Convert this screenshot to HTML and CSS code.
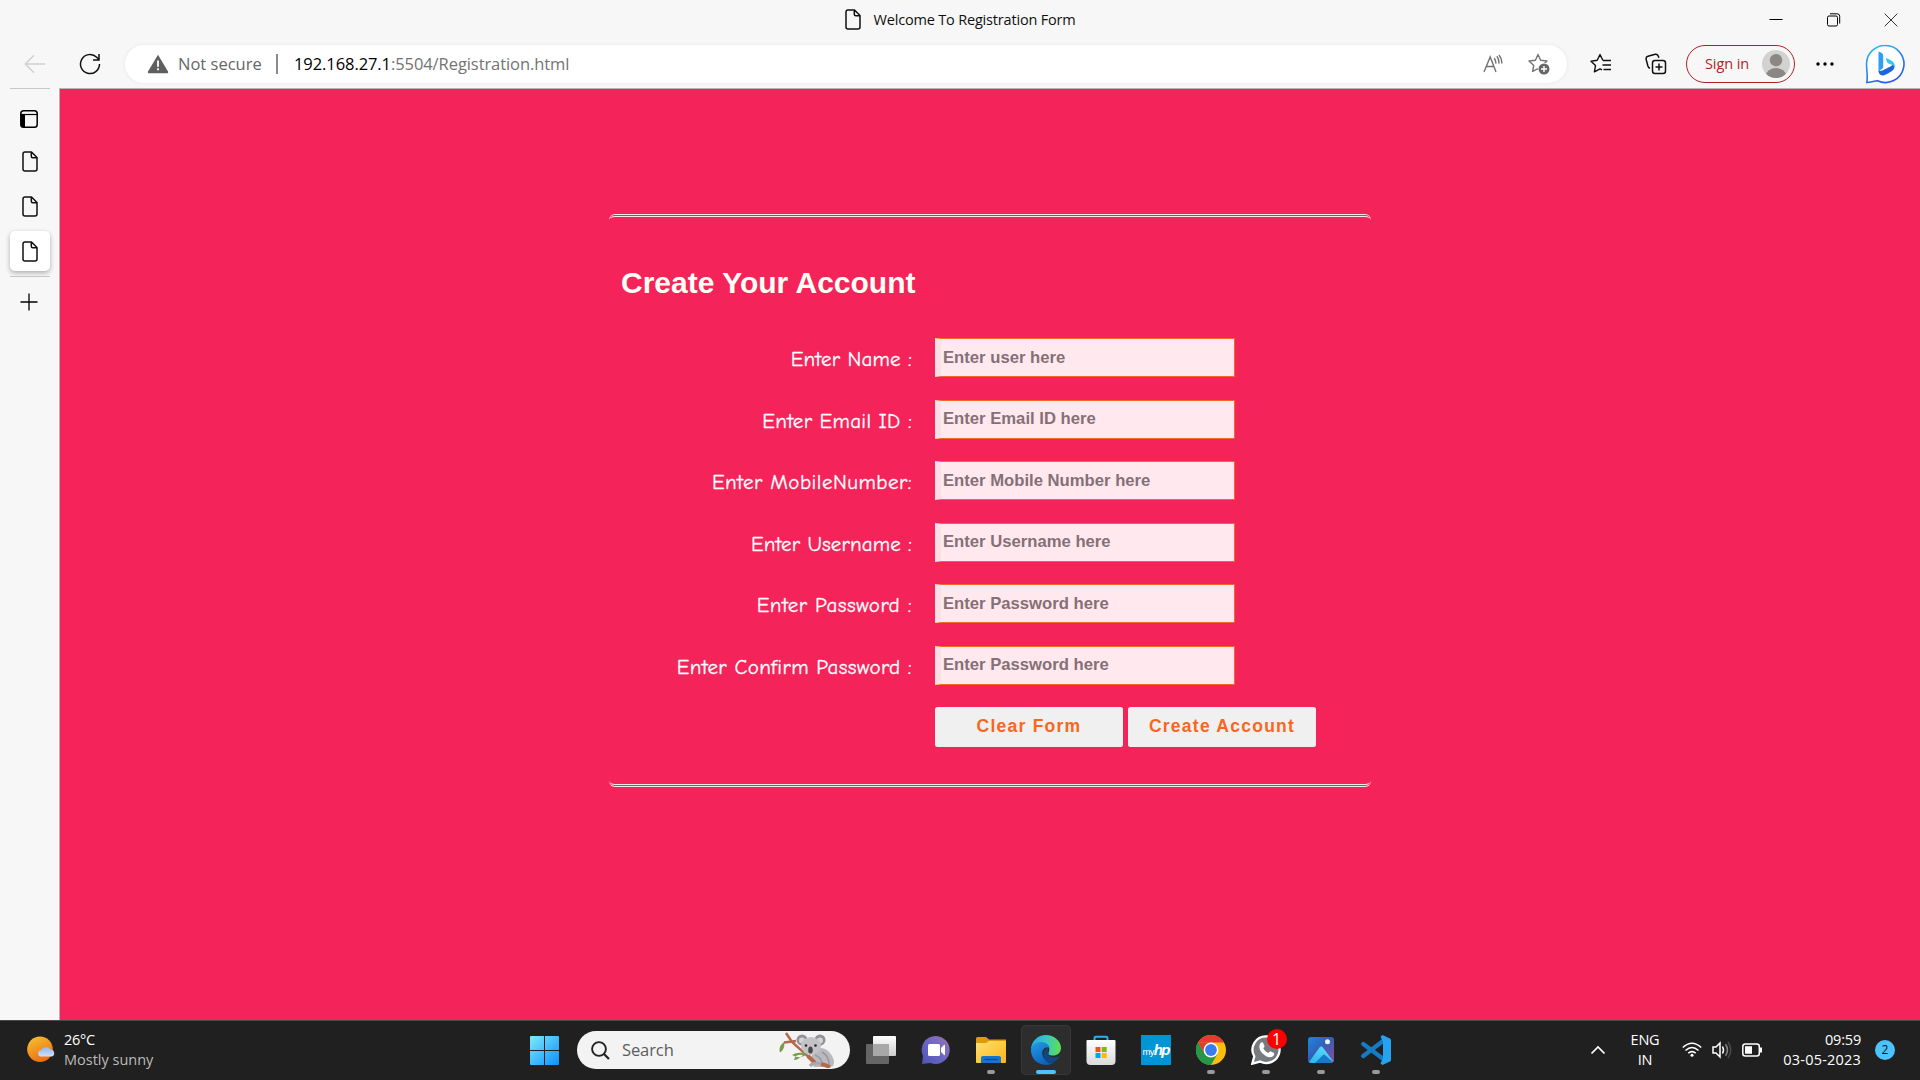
FILE: index.html
```html
<!DOCTYPE html>
<html lang="en">
<head>
<meta charset="utf-8">
<title>Welcome To Registration Form</title>
<link rel="stylesheet" href="styles.css">
</head>
<body>
<svg class="defs" width="0" height="0" aria-hidden="true">
  <defs>
    <symbol id="page" viewBox="0 0 16 21"><path d="M3 1h6.5L15 6.5V18a2 2 0 0 1-2 2H3a2 2 0 0 1-2-2V3a2 2 0 0 1 2-2zM9.300 1v4.200a1.500 1.500 0 0 0 1.500 1.500H15" fill="none" stroke="currentColor" stroke-width="1.500" stroke-linejoin="round"/></symbol>
  </defs>
</svg>
<header class="browser">
  <div class="titlebar">
    <div class="title"><svg class="page-icon" width="16" height="21"><use href="#page"/></svg><span>Welcome To Registration Form</span></div>
    <div class="window-controls">
      <svg width="14" height="14" viewBox="0 0 14 14"><path d="M0.500 6.500h13" stroke="#000"/></svg>
      <svg width="14" height="14" viewBox="0 0 14 14" fill="none" stroke="#000"><rect x=".5" y="3" width="10" height="10" rx="1.500"/><path d="M3 .8h7.200a2.500 2.500 0 0 1 2.500 2.500v7.200"/></svg>
      <svg width="14" height="14" viewBox="0 0 14 14"><path d="M.7.7l12.600 12.600M13.300.7.7 13.300" stroke="#333"/></svg>
    </div>
  </div>
  <div class="toolbar">
    <svg class="back" width="22" height="20" viewBox="0 0 22 20"><path d="M21 10H1.500M10 1.300 1.300 10l8.700 8.700" fill="none" stroke="#cfcfcf" stroke-width="1.400"/></svg>
    <svg class="reload" width="22" height="22" viewBox="0 0 22 22"><path d="M20.500 11a9.500 9.500 0 1 1-2.800-6.700L20 6.500M20 1v6h-6" fill="none" stroke="#111" stroke-width="1.500"/></svg>
    <div class="address">
      <svg width="22" height="20" viewBox="0 0 22 20"><path d="M11 .8 1 17.400c-.5 1 .1 1.800 1.100 1.800h17.800c1 0 1.600-.8 1.100-1.800z" fill="#5f5f5f"/><path d="M11 6.500v6.300M11 14.300v2" stroke="#fff" stroke-width="1.800"/></svg>
      <span class="security">Not secure</span>
      <span class="divider"></span>
      <span class="url"><b>192.168.27.1</b>:5504/Registration.html</span>
      <svg class="read" width="20" height="20" viewBox="0 0 20 20" fill="none" stroke="#737373" stroke-width="1.400"><path d="M1 18 7.200 3 13 18M3.300 12.500h7.700M11.200 4.200q2 2.500 1.500 5.500M13.800 2.200q2.700 3.500 2 7.500M16 1q3.300 4 2.700 8.500"/></svg>
      <svg class="star" width="22" height="22" viewBox="0 0 22 22"><path d="m10 1.500 2.600 5.700 6.400.8-4.800 4.400 1.200 6.100L10 15.600 4.600 18.500l1.200-6.100L1 8l6.400-.8z" fill="none" stroke="#737373" stroke-width="1.400" stroke-linejoin="round"/><circle cx="16" cy="16" r="6.200" fill="#fff"/><circle cx="16" cy="16" r="5.500" fill="#666"/><path d="M16 13v6M13 16h6" stroke="#fff" stroke-width="1.400"/></svg>
    </div>
    <div class="actions">
      <svg width="22" height="22" viewBox="0 0 22 22" fill="none" stroke="#111" stroke-width="1.400" stroke-linejoin="round"><path d="M13 7.500 10 1.600 7.200 7.300 1 8.200l4.500 4.400-1.100 6.200L10 15.900l2 1M13 7.500h8M12.500 12H21M13.500 16.500H21"/></svg>
      <svg width="22" height="22" viewBox="0 0 22 22" fill="none" stroke="#111" stroke-width="1.500"><rect x="7.500" y="7.500" width="13" height="13" rx="2.500"/><path d="M14 10.500v7M10.500 14h7M5 15.300C3.500 15 3.200 14 2.900 13L1.200 6.600C.8 5 1.600 3.700 3 3.300L10.200 1.300c1.600-.4 2.600.3 3.200 1.900l.4 1.500"/></svg>
    </div>
    <div class="signin"><span>Sign in</span>
      <svg width="28" height="28" viewBox="0 0 28 28"><defs><clipPath id="face"><circle cx="14" cy="14" r="14"/></clipPath></defs><circle cx="14" cy="14" r="14" fill="#d4d2d0"/><g fill="#8b8785" clip-path="url(#face)"><circle cx="14" cy="10.200" r="6.200"/><ellipse cx="14" cy="25.500" rx="10" ry="7.500"/></g></svg>
    </div>
    <svg class="more" width="18" height="4" viewBox="0 0 18 4"><circle cx="2" cy="2" r="1.700"/><circle cx="9" cy="2" r="1.700"/><circle cx="16" cy="2" r="1.700"/></svg>
    <svg class="bing" width="40" height="40" viewBox="0 0 40 40"><defs><linearGradient id="bg1" x2=".6" y2="1"><stop stop-color="#27c4f5"/><stop offset="1" stop-color="#2456e6"/></linearGradient></defs><path d="M20 1.500a18.500 18.500 0 1 1-7.500 35.200C8.500 37.300 5 38.500 1.800 38.500 3 34 1.500 25 1.500 20A18.500 18.500 0 0 1 20 1.500z" fill="#fff" stroke="url(#bg1)" stroke-width="1.600"/><path d="m13.500 7.500 3 1.300q1.700.9 1.700 2.700v12.200l-4.700 4z" fill="#2f9df5"/><path d="M13.500 26.500q.3 5.300 4.700 4.900 2-.2 4.300-1.600l4.500-2.800q3.200-2.600 2.300-6.600-.5-1.700-2-2.400 1 3-2 4.600l-7.300 3.700q-3 1.300-4.500.2z" fill="#1d64df"/><path d="M20.800 14.800q.2-.8 1-.5l4 2q4.300 2.200 3.500 7-.8-2.200-3-2.800l-2.800-1q-1-.4-1.400-1.500z" fill="#31c8ef"/></svg>
  </div>
</header>
<div class="workspace">
  <nav class="tabs">
    <span class="rule"></span>
    <svg class="tab-menu" width="18" height="18" viewBox="0 0 18 18"><rect x=".8" y=".8" width="16.400" height="16.400" rx="2.800" fill="none" stroke="#000" stroke-width="1.500"/><path d="M1 4.500h16" stroke="#000" stroke-width="1.200"/><path d="M1 4.500h4V17H3q-2 0-2-2z"/></svg>
    <div class="tab"><svg class="page-icon" width="16" height="21"><use href="#page"/></svg></div>
    <div class="tab"><svg class="page-icon" width="16" height="21"><use href="#page"/></svg></div>
    <div class="tab active"><svg class="page-icon" width="16" height="21"><use href="#page"/></svg></div>
    <span class="rule after"></span>
    <svg class="new-tab" width="18" height="18" viewBox="0 0 18 18"><path d="M9 .5v17M.5 9h17" stroke="#000" stroke-width="1.300"/></svg>
  </nav>
  <main>
    <form class="register">
      <h1>Create Your Account</h1>
      <label class="l-name" for="n">Enter Name :</label><input id="n" placeholder="Enter user here">
      <label class="l-mail" for="e">Enter Email ID :</label><input id="e" placeholder="Enter Email ID here">
      <label class="l-mobile" for="m">Enter MobileNumber:</label><input id="m" placeholder="Enter Mobile Number here">
      <label class="l-user" for="u">Enter Username :</label><input id="u" placeholder="Enter Username here">
      <label class="l-pass" for="p">Enter Password :</label><input id="p" type="password" placeholder="Enter Password here">
      <label class="l-confirm" for="c">Enter Confirm Password :</label><input id="c" type="password" placeholder="Enter Password here">
      <div class="buttons"><button type="reset">Clear Form</button><button type="button">Create Account</button></div>
    </form>
  </main>
</div>
<footer class="taskbar">
  <div class="weather">
    <svg width="30" height="28" viewBox="0 0 30 28"><defs><linearGradient id="sun" x1=".2" x2=".7" y2="1"><stop stop-color="#f3c02f"/><stop offset="1" stop-color="#f0660f"/></linearGradient><linearGradient id="cloud" x2="0" y2="1"><stop stop-color="#8fb5ef"/><stop offset="1" stop-color="#cfe0fa"/></linearGradient></defs><circle cx="13" cy="13.200" r="12.800" fill="url(#sun)"/><path d="M13.500 20.500a3.200 3.200 0 0 1 .6-6.300 5.300 5.300 0 0 1 9.300-.7 3.600 3.600 0 0 1 1.400 7z" fill="url(#cloud)"/></svg>
    <div><p class="temp">26°C</p><p class="sky">Mostly sunny</p></div>
  </div>
  <div class="apps">
    <svg class="start" width="29" height="29" viewBox="0 0 29 29"><defs><linearGradient id="win" x2="1" y2="1"><stop stop-color="#7deafd"/><stop offset="1" stop-color="#0b90fb"/></linearGradient></defs><path d="M1 0h13v14H0V1q0-1 1-1zM15 0h13q1 0 1 1v13H15zM0 15h14v14H1q-1 0-1-1zM15 15h14v13q0 1-1 1H15z" fill="url(#win)"/></svg>
    <div class="search">
      <svg width="19" height="19" viewBox="0 0 19 19"><circle cx="8" cy="8" r="6.900" fill="none" stroke="#222" stroke-width="1.900"/><path d="m13 13 5 5" stroke="#222" stroke-width="2.200"/></svg>
      <span>Search</span>
      <svg class="koala" width="58" height="36" viewBox="0 0 58 36">
        <path d="M5 10.500 17 9M7 1l6 9 19 17" fill="none" stroke="#b4694c" stroke-width="2.500"/><path d="M5 10q-6 4.500-4 10.500 5.500-3.500 4-10.500zM13 23q6-4 15-1-6 6-15 1zM15 28q4 0 9-5-8-1-9 5z" fill="#779c4c"/>
        <path d="M36 17q9-3 15 4 6 7 3 13l-3 1H35q-5-7-1-14z" fill="#b9b9be"/><circle cx="23" cy="8" r="5.500" fill="#919197"/><circle cx="41" cy="8" r="5.500" fill="#919197"/><circle cx="23" cy="8.500" r="3" fill="#d9d3d7"/><circle cx="41" cy="8.500" r="3" fill="#d9d3d7"/><ellipse cx="32" cy="14" rx="10" ry="9" fill="#c2c2c7"/><ellipse cx="31.500" cy="18" rx="2.300" ry="3.500" fill="#4a484b"/><circle cx="27" cy="13.500" r="1.300" fill="#3d1f22"/><circle cx="36.500" cy="13.500" r="1.300" fill="#3d1f22"/><path d="M36 23q5 2 7 7M43 20q7 4 7 13" fill="none" stroke="#98989f" stroke-width="1.500"/><path d="m29 24 7 7M42 32q5 1 9 3.500" fill="none" stroke="#b4694c" stroke-width="4"/><path d="M31 34q3-4 11-2" fill="none" stroke="#a6a6ac" stroke-width="3"/>
      </svg>
    </div>
    <div class="app"><svg width="30" height="30" viewBox="0 0 30 30"><defs><linearGradient id="tv" x2="0" y2="1"><stop stop-color="#fff"/><stop offset="1" stop-color="#ccc"/></linearGradient></defs><rect x="7" y="1" width="23" height="20" rx="1" fill="url(#tv)"/><rect y="9" width="23" height="20" rx="1" fill="#777" opacity=".8"/><path d="M7 9h16v12H7z" fill="#a8a8a8"/></svg></div>
    <div class="app"><svg width="30" height="30" viewBox="0 0 30 30"><defs><linearGradient id="chat" x1="1" x2="0" y2="1"><stop stop-color="#9d72ad"/><stop offset=".5" stop-color="#6b67c3"/><stop offset="1" stop-color="#4c53b8"/></linearGradient></defs><path d="M15 1a14 14 0 1 1-5.500 27L1 29l1-8A14 14 0 0 1 15 1z" fill="url(#chat)"/><rect x="7" y="9" width="12" height="12" rx="1.500" fill="#fff"/><path d="m20 13 3-3q1-.5 1 .5v9q0 1-1 .5l-3-3z" fill="#fff"/></svg></div>
    <div class="app running"><svg width="30" height="30" viewBox="0 0 30 30"><defs><linearGradient id="fold" x2="1" y2="1"><stop stop-color="#ffdf73"/><stop offset="1" stop-color="#fbb616"/></linearGradient></defs><path d="M1.500 2H10l3 2.500h17V10H0V3.500Q0 2 1.500 2z" fill="#dc9b09"/><path d="M0 8h10l3-2h17v21q0 1-1 1H1q-1 0-1-1z" fill="url(#fold)"/><path d="M5 28v-5q0-2 2-2h16q2 0 2 2v5z" fill="#1474cf"/><path d="M8.500 24.500h13" stroke="#084d94" stroke-width="1.200"/></svg></div>
    <div class="app running current"><svg width="30" height="30" viewBox="0 0 30 30"><defs><linearGradient id="e1" x2="1"><stop stop-color="#27a9e5"/><stop offset=".5" stop-color="#37c6c7"/><stop offset="1" stop-color="#62df4b"/></linearGradient><linearGradient id="e2" x2=".6" y2="1"><stop stop-color="#229fe3"/><stop offset="1" stop-color="#0b5ec2"/></linearGradient></defs><path d="M0 15C0 6 7 0 15 0c8 0 15 6 15 13 0 5-4 7.500-8 7.500-3.500 0-5.500-1.300-4.500-2.800C20 13 17 8 11 8 5 8 2 10 0 15z" fill="url(#e1)"/><path d="M0 15C1 9 5 7 10 7c4 0 8 2.500 8.500 6-8-3-10 8-3 13 2 1.500 5 2 7 1.500C20 29.300 17.500 30 15 30 6 30-.3 23 0 15z" fill="url(#e2)"/><path d="M17.500 17.700q-1.500-1.500-.5-5-4.500 1.500-4.500 6.300 0 7 6 9.500 2 .5 4-1 3.500-2 5.500-5 .3-1.300-1-.8-3.500 1.500-7 .3-3-1.500-2.500-4.300z" fill="#114783"/></svg></div>
    <div class="app"><svg width="30" height="30" viewBox="0 0 30 30"><defs><linearGradient id="st" x2="0" y2="1"><stop stop-color="#fff"/><stop offset="1" stop-color="#dadada"/></linearGradient></defs><path d="M8.500 7V3q0-1.300 1.300-1.300h10.400q1.300 0 1.300 1.300v4" fill="none" stroke="#29b2ea" stroke-width="2"/><path d="M1.500 5h27q1 0 1 1v20q0 4-4 4h-21q-4 0-4-4V6q0-1 1-1z" fill="url(#st)"/><path d="M9.500 12h5v5h-5z" fill="#f25022"/><path d="M15.700 12h5v5h-5z" fill="#7fba00"/><path d="M9.500 18h5v5h-5z" fill="#00a4ef"/><path d="M15.700 18h5v5h-5z" fill="#ffb900"/></svg></div>
    <div class="app"><span class="hp"><small>my</small>hp</span></div>
    <div class="app running"><svg width="30" height="30" viewBox="0 0 30 30"><circle cx="15" cy="15" r="15" fill="#fbbe0c"/><path d="M2 7.500A15 15 0 0 1 28 7.500H15z" fill="#e33b2e"/><path d="M2 7.500A15 15 0 0 0 15 30l6.500-11.200-13-.1z" fill="#269748"/><path d="M2 7.500 8.500 18.700 15 7.500z" fill="#e33b2e"/><path d="M2 7.500 8.500 18.700l6.500 3.500V30A15 15 0 0 1 2 7.500z" fill="#269748"/><circle cx="15" cy="15" r="7.400" fill="#fff"/><circle cx="15" cy="15" r="5.900" fill="#3a7df0"/></svg></div>
    <div class="app running"><svg width="30" height="30" viewBox="0 0 30 30"><path d="M15.300 1.300a13.400 13.400 0 1 1-6.300 25.300L1.300 28.700l2-7.300A13.400 13.400 0 0 1 15.300 1.300z" fill="#777b7d" stroke="#fff" stroke-width="2.300"/><path d="M9.500 8q1-1.200 2.200-.7l1.800 3.700q.2.900-1.300 2.300 1.700 3.500 5 4.700 1.700-2 2.300-1.800l3.500 1.800q.7 3.300-3.500 4.200-4 .3-8.500-4.200-4.500-5-1.500-10z" fill="#fff"/></svg><span class="badge">1</span></div>
    <div class="app running"><svg width="26" height="26" viewBox="0 0 26 26"><defs><linearGradient id="ph" x2="1" y2="1"><stop stop-color="#168ae0"/><stop offset=".45" stop-color="#355eb7"/><stop offset="1" stop-color="#8a4d9b"/></linearGradient><linearGradient id="mt" x1="0" y1="1" x2=".8"><stop stop-color="#20b7ed"/><stop offset="1" stop-color="#67dafa"/></linearGradient></defs><rect width="26" height="26" rx="3" fill="url(#ph)"/><path d="m1 25 10.500-14.500q1.700-2 3.400 0L25 24q-1 2-3 2H3q-1 0-2-1z" fill="url(#mt)"/><path d="m7 26 8-8q1-1 2 0l8 7-2 1z" fill="#1679cd"/><circle cx="19.500" cy="4.800" r="2.500" fill="#e9f5ff"/></svg></div>
    <div class="app running"><svg width="30" height="30" viewBox="0 0 30 30"><path d="m2.300 9 20 15M2.300 21 22 6" stroke="#147bc4" stroke-width="4.300" stroke-linecap="round"/><path d="m21.500 0 7.500 3.500q1 .5 1 1.500v20q0 1-1 1.500L21.500 30l-2-1.500L22 23V7l-2.500-5.500z" fill="#25a3ef"/></svg></div>
  </div>
  <div class="tray">
    <svg class="chevron" width="16" height="10" viewBox="0 0 16 10"><path d="m1.500 8.500 6.500-6.500 6.500 6.500" fill="none" stroke="#fff" stroke-width="1.700"/></svg>
    <div class="lang">ENG<br>IN</div>
    <svg class="wifi" width="20" height="16" viewBox="0 0 20 16" fill="none" stroke="#fff" stroke-width="1.600"><path d="M.8 5.500q9.200-8.500 18.400 0M3.500 8.500q6.500-6 13 0M6.300 11.200q3.700-3.300 7.400 0"/><circle cx="10" cy="13.300" r="1.500" fill="#fff" stroke="none"/></svg>
    <svg class="volume" width="21" height="18" viewBox="0 0 21 18" fill="none" stroke="#fff" stroke-width="1.500"><path d="M1 6v6h3l4 4V2L4 6zM10.500 5.500q2 3.500 0 7"/><path d="M13.500 3.300q4 5.700 0 11.400" stroke="#888"/><path d="M16 1q5.500 8 0 16" stroke="#4a4a4a"/></svg>
    <svg class="battery" width="21" height="14" viewBox="0 0 21 14"><rect x=".8" y="1" width="16.500" height="12" rx="2.500" fill="none" stroke="#fff" stroke-width="1.500"/><path d="M3 3.300h7v7.400H3zM18 4.500h2v5h-2z" fill="#fff"/></svg>
    <div class="clock"><span class="time">09:59</span><br><span class="date">03-05-2023</span></div>
    <span class="count">2</span>
  </div>
</footer>
</body>
</html>
```
FILE: styles.css
```css
* { box-sizing: border-box; }
body {
  margin: 0;
  width: 1920px;
  height: 1080px;
  overflow: hidden;
  display: flex;
  flex-direction: column;
  font-family: "Open Sans", "Noto Sans", sans-serif;
  background: #f7f7f7;
  color: #111;
}
svg { display: block; flex: none; }
.defs { position: absolute; }
p { margin: 0; }

/* Browser chrome */
.browser { height: 88px; flex: none; white-space: nowrap; }
.titlebar {
  height: 39px;
  display: grid;
  grid-template-columns: 845px 1fr auto;
  align-items: center;
}
.title {
  grid-column: 2;
  display: flex;
  align-items: center;
  gap: 12.500px;
  font-size: 14.500px;
  letter-spacing: -.18px;
}
.window-controls { display: flex; gap: 43.500px; padding-right: 22px; }
.toolbar { height: 49px; display: flex; align-items: center; }
.back { margin-left: 24px; }
.reload { margin-left: 33px; }
.address {
  width: 1442px;
  height: 38px;
  margin-left: 24px;
  padding: 0 17px 0 22px;
  border-radius: 19px;
  background: #fff;
  box-shadow: 0 0 4px rgba(0, 0, 0, .07);
  display: flex;
  align-items: center;
  font-size: 16.500px;
}
.security, .url { padding-bottom: 1px; }
.security { margin-left: 9px; width: 84px; color: #666; }
.divider { width: 2px; height: 20px; margin: 0 16px 0 14px; background: #8a8a8a; }
.url { color: #737373; letter-spacing: -.08px; }
.url b { color: #000; font-weight: 400; }
.read { margin-left: auto; }
.star { margin-left: 25px; }
.actions { display: flex; gap: 33px; margin-left: 23px; }
.signin {
  width: 109px;
  height: 38px;
  margin-left: 19px;
  padding: 0 4px 0 18px;
  border: 1.500px solid #b01f24;
  border-radius: 19px;
  display: flex;
  align-items: center;
  justify-content: space-between;
  color: #b01f24;
  font-size: 14.500px;
  letter-spacing: -.1px;
}
.signin span { padding-bottom: 1px; }
.more { margin-left: 21px; }
.bing { margin-left: 31px; }

.workspace { height: 932px; flex: none; display: flex; }
.tabs { width: 59px; display: flex; flex-direction: column; align-items: center; }
.rule { width: 40px; height: 1px; background: #c8c8c8; flex: none; }
.tab-menu { margin: 21px 2px 13px 0; }
.tab {
  width: 40px;
  height: 40px;
  margin-bottom: 5px;
  flex: none;
  border-radius: 5px;
  display: flex;
  align-items: center;
  justify-content: center;
}
.tab.active { background: #fff; box-shadow: 0 2px 5px rgba(0, 0, 0, .3); }
.new-tab { margin: 16px 1px 0 0; }

/* Registration page */
main {
  flex: 1;
  border-top: 1px solid #b5b5b5;
  border-left: 1px solid #b5b5b5;
  background: #f4245b;
  padding: 125px 0 0 549px;
}
.register {
  width: 762px;
  height: 573px;
  padding-left: 12px;
  border: 3px double #eee;
  border-width: 3px 0;
  border-radius: 6px;
  display: grid;
  grid-template-columns: 291px 1fr;
  grid-template-rows: 121px repeat(7, 61.500px);
  column-gap: 23px;
}
.register h1 {
  grid-column: 1 / -1;
  margin: 48px 0 0;
  font: bold 30px/35px "Liberation Sans", Arial, sans-serif;
  color: #fffff4;
}
.register label {
  justify-self: end;
  font: 21px/30px "Comic Sans MS", "Comic Neue", Lato, sans-serif;
  -webkit-text-stroke: .3px #fff;
  padding-top: 6px;
  color: #fff;
  white-space: nowrap;
}
.l-name { letter-spacing: .2px; }
.l-mail { letter-spacing: .29px; }
.l-mobile { letter-spacing: .47px; }
.l-user { letter-spacing: .14px; }
.l-pass { letter-spacing: .48px; }
.l-confirm { letter-spacing: .36px; }
.register input {
  width: 300px;
  height: 39.200px;
  padding: 0 2px;
  border: 1px solid #f3672a;
  border-left: 6px solid #f6e2e6;
  border-radius: 0;
  background: #ffe9ee;
  font: bold 16.670px "Liberation Sans", Arial, sans-serif;
}
.register input::placeholder { color: #857077; }
.buttons { grid-column: 2; display: flex; gap: 5px; }
.buttons button {
  width: 188px;
  height: 40px;
  padding: 0 0 2px;
  border: 0;
  border-radius: 2.500px;
  background: #f0f0f0;
  color: #f96621;
  font: bold 17.500px "Liberation Sans", Arial, sans-serif;
  letter-spacing: 1.250px;
}

/* Taskbar */
.taskbar {
  height: 60px;
  flex: none;
  display: grid;
  grid-template-columns: 530px 1fr auto;
  align-items: center;
  border-top: 1px solid #484848;
  padding-bottom: 1px;
  background: #202020;
  color: #fff;
  font-size: 14.500px;
  line-height: 20px;
}
.weather { display: flex; align-items: center; gap: 7px; padding: 0 0 1px 27px; }
.weather .temp { letter-spacing: -.3px; }
.weather .sky { color: #bbb; }
.apps { display: flex; align-items: center; }
.search {
  width: 273px;
  height: 38px;
  margin: 0 3.500px 0 18px;
  padding: 0 13px 0 14px;
  border-radius: 19px;
  background: #f3f3f3;
  color: #5d5d5d;
  font-size: 16.500px;
  letter-spacing: -.1px;
  display: flex;
  align-items: center;
}
.search span { margin-left: 12px; }
.koala { margin-left: auto; }
.app {
  position: relative;
  width: 50px;
  height: 50px;
  margin-left: 5px;
  flex: none;
  display: flex;
  align-items: center;
  justify-content: center;
}
.search + .app { margin-left: 2px; }
.app.running::after {
  content: "";
  position: absolute;
  bottom: 1px;
  left: 21px;
  width: 8px;
  height: 4px;
  border-radius: 2px;
  background: #999;
}
.app.current { background: #2d2d2d; border-radius: 5px; box-shadow: inset 0 0 0 1px #383838; }
.app.current::after { left: 15px; width: 20px; background: #4cc2ff; }
.hp {
  width: 30px;
  height: 30px;
  background: #0096d6;
  display: flex;
  align-items: baseline;
  justify-content: center;
  font: italic bold 15px/29px "Liberation Sans", Arial, sans-serif;
  letter-spacing: -1.800px;
}
.hp small { font-size: 9.500px; letter-spacing: -.7px; font-style: normal; font-weight: 400; }
.badge {
  position: absolute;
  left: 26px;
  top: 4px;
  width: 20px;
  height: 20px;
  border-radius: 50%;
  background: #f00;
  font-size: 16px;
  line-height: 20px;
  text-align: center;
}
.tray { display: flex; align-items: center; padding-right: 25px; }
.lang, .clock { padding-bottom: 1px; }
.lang { width: 32px; margin-left: 23px; text-align: center; letter-spacing: -.2px; }
.wifi { margin-left: 21px; }
.volume { margin-left: 10px; }
.battery { margin-left: 9px; }
.clock { width: 85px; margin-left: 13px; text-align: right; white-space: nowrap; }
.time { letter-spacing: -.2px; }
.date { letter-spacing: .2px; }
.count {
  width: 20px;
  height: 20px;
  margin-left: 14px;
  border-radius: 50%;
  background: #4cc2ff;
  color: #111;
  font-size: 12px;
  text-align: center;
}
```
